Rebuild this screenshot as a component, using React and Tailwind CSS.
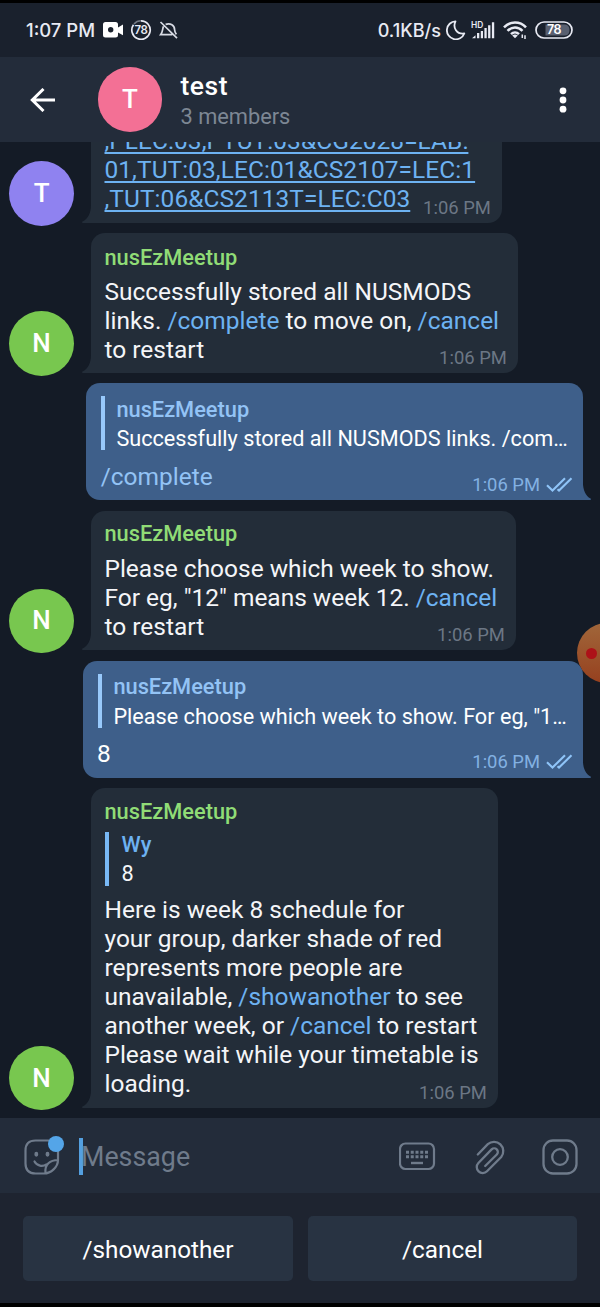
import React from "react";

const Cmd = ({ children }) => <span className="text-[#6db2f2]">{children}</span>;

function Avatar({ letter, color }) {
  return (
    <div className={`flex size-[64.5px] shrink-0 items-center justify-center rounded-full text-[26px] font-medium text-white ${color}`}>
      {letter}
    </div>
  );
}

function Time({ className }) {
  return <span className={`text-[18.4px] leading-[22px] whitespace-nowrap ${className}`}>1:06 PM</span>;
}

function Incoming({ letter, color, width, height, last, children }) {
  return (
    <div className="flex shrink-0 items-end pl-[9.3px]">
      <div className="-mb-[2.7px] flex">
        <Avatar letter={letter} color={color} />
      </div>
      <div className={`relative ml-[17px] flex flex-col justify-end rounded-[14px] rounded-bl-none bg-[#232d39] pr-[11px] pb-[9.4px] pl-[13.7px] ${width} ${height}`}>
        <svg className="absolute bottom-0 -left-[9px]" width="10" height="18" viewBox="0 0 10 18" fill="#232d39">
          <path d="M10 0H9C9 8 6 14 0.5 16.6C-.3 17.2 0 18 1 18H10Z" />
        </svg>
        {children}
        <div className="flex h-[29px] items-center justify-between">
          {last}
          <Time className="mt-[18px] text-[#6c7785]" />
        </div>
      </div>
    </div>
  );
}

function Outgoing({ width, quote, children }) {
  return (
    <div className="flex shrink-0 justify-end pr-[17px]">
      <div className={`relative flex h-[116.8px] flex-col rounded-[14px] rounded-br-none bg-[#3e5f8a] pt-[13px] pr-[10px] pl-[14.7px] ${width}`}>
        <svg className="absolute -right-[8px] bottom-0" width="9" height="18" viewBox="0 0 10 18" preserveAspectRatio="none" fill="#3e5f8a">
          <path d="M0 0H1C1 8 4 14 9.5 16.6C10.3 17.2 10 18 9 18H0Z" />
        </svg>
        <div className="flex h-[54px] flex-col border-l-4 border-[#98c9fb] pl-[11.7px]">
          <div className="mt-[0.6px] text-[21.8px] leading-[26px] font-medium text-[#93c3f5]">nusEzMeetup</div>
          <div className="mt-[3.4px] text-[21.65px] leading-[26px] whitespace-nowrap text-white">{quote}</div>
        </div>
        <div className="mt-[11.4px] flex h-[29px] items-center justify-between">
          {children}
          <div className="mt-[17px] flex items-center gap-[6px]">
            <Time className="text-[#83b1e2]" />
            <svg width="27" height="16" viewBox="0 0 27 16" fill="none" stroke="#8fc4f8" strokeWidth="2.1">
              <path d="M1 8.3L6.5 13.6L19 1.2M11.5 12.2L13 13.6L25.5 1.2" />
            </svg>
          </div>
        </div>
      </div>
    </div>
  );
}

const Sender = ({ className }) => (
  <div className={`text-[21.8px] leading-[26px] font-medium text-[#90dc76] ${className}`}>nusEzMeetup</div>
);

function StatusBar() {
  return (
    <div className="flex h-[54px] shrink-0 items-center bg-[#1a212d] pr-[27px] pl-[26px] font-['Inter',sans-serif] text-[18.5px] font-medium text-[#e8eaf3]">
      <span className="mt-[1px] w-[70px] whitespace-nowrap">1:07 PM</span>
      <svg className="ml-[7px]" width="21" height="16" viewBox="0 0 21 16" fill="#fff">
        <path fillRule="evenodd" d="M2.5 0H12.5Q15 0 15 2.5V5.5L20 2.6V13.2L15 10.4V13Q15 15.5 12.5 15.5H2.5Q0 15.5 0 13V2.5Q0 0 2.5 0ZM7.7 5A2.7 2.7 0 1 0 7.7 10.4A2.7 2.7 0 1 0 7.7 5Z" />
      </svg>
      <svg className="ml-[6px]" width="22" height="22" viewBox="0 0 22 22">
        <path d="M11 1.8A9.2 9.2 0 1 1 3.5 5.7" fill="none" stroke="#e8eaf3" strokeWidth="1.7" />
        <path d="M4 5A9.2 9.2 0 0 1 11 1.8" fill="none" stroke="#737985" strokeWidth="1.5" />
        <text x="11" y="15" textAnchor="middle" fontSize="11.5" fontWeight="600" letterSpacing="-0.5" fill="#e8eaf3">78</text>
      </svg>
      <svg className="ml-[7px]" width="20" height="19" viewBox="0 0 20 19" fill="none" stroke="#d8dbe4" strokeWidth="1.7">
        <path d="M1.5 1L18 17.2M4.5 5.4C3.3 8 4.1 10.5 1.6 13.7H13.4M6.6 3.4C11.5 1.6 15.5 4.6 15.6 8.7C15.7 10.6 16.3 12 17.4 13.4" />
      </svg>
      <span className="mt-[1px] ml-auto text-[18.1px] whitespace-nowrap">0.1KB/s</span>
      <svg className="ml-[5px]" width="20" height="20" viewBox="0 0 20 20" fill="none" stroke="#e8eaf3" strokeWidth="1.8" strokeLinejoin="round">
        <path d="M9.5 1.3C6.4 7.6 10.8 14.6 18.3 13.5A9 9 0 1 1 9.5 1.3Z" />
      </svg>
      <svg className="ml-[5px]" width="24" height="20" viewBox="0 0 24 20" fill="#e8eaf3">
        <text x="0" y="7.6" fontSize="8.4" fontWeight="600">HD</text>
        <path d="M1 18.2L4.5 15.2V18.2ZM6 13H8.3V18.2H6ZM9.8 11H12V18.2H9.8ZM13.4 8H15.7V18.2H13.4ZM17.1 5.2H19.4V18.2H17.1ZM20.9 2.2H23.2V18.2H20.9Z" />
      </svg>
      <svg className="ml-[8px]" width="24" height="20" viewBox="0 0 24 20" fill="none" stroke="#e8eaf3" strokeWidth="2.5">
        <path d="M1 7.3C7 .9 17 .9 23 7.3M4.5 10.8C9 6.3 15 6.3 19.5 10.8M8 14.1C10.3 11.9 13.7 11.9 16 14.1" />
        <path d="M9.2 15.4Q12 13.4 14.8 15.4L12 18.3Z" fill="#e8eaf3" stroke="none" />
        <path d="M19.3 14.5V18M22 15.2V19" strokeWidth="1.5" />
      </svg>
      <svg className="ml-[8px]" width="38" height="18" viewBox="0 0 38 18">
        <rect x="1" y="1" width="36" height="16" rx="8" fill="none" stroke="#e8eaf3" strokeWidth="1.7" />
        <path d="M10.5 3.5H30Q34.5 4 34.5 9T30 14.5H10.5Z" fill="#596070" />
        <text x="19" y="13.4" textAnchor="middle" fontSize="12.5" fontWeight="600" letterSpacing="-0.5" fill="#fff">78</text>
      </svg>
    </div>
  );
}

function Header() {
  return (
    <div className="flex h-[85px] shrink-0 items-center bg-[#232c3a] pr-[33px] pl-[30px]">
      <svg width="25" height="24" viewBox="0 0 25 24" fill="none" stroke="#fff" strokeWidth="3">
        <path d="M25 12H2.5M13.5 1L2.3 12L13.5 23" />
      </svg>
      <div className="ml-[42.7px] flex">
        <Avatar letter="T" color="bg-[#f37095]" />
      </div>
      <div className="mt-[3px] ml-[18.3px] flex flex-col">
        <span className="text-[26.5px] leading-[30px] font-medium tracking-[0.5px] text-white">test</span>
        <span className="mt-[1px] text-[21.8px] leading-[30px] text-[#7d8794]">3 members</span>
      </div>
      <svg className="ml-auto" width="8" height="26" viewBox="0 0 8 26" fill="#fff">
        <circle cx="4" cy="3.8" r="3.4" />
        <circle cx="4" cy="13" r="3.4" />
        <circle cx="4" cy="22.2" r="3.4" />
      </svg>
    </div>
  );
}

function Chat() {
  return (
    <div className="flex h-[976px] shrink-0 flex-col justify-end gap-[10.5px] overflow-hidden bg-[#141b26] pb-[10.3px] text-[24.48px] leading-[29px] text-[#f4f5f8]">
      <Incoming
        letter="T"
        color="bg-[#8f82f0]"
        width="w-[411px]"
        height="h-[110px]"
        last={<span className="tracking-[0.06px] whitespace-nowrap text-[#6db2f2] underline decoration-[1.5px] underline-offset-[3px]">,TUT:06&amp;CS2113T=LEC:C03</span>}
      >
        <div className="tracking-[0.06px] whitespace-nowrap text-[#6db2f2] underline decoration-[1.5px] underline-offset-[3px]">
          <div>,PLEC:03,PTUT:03&amp;CG2028=LAB:</div>
          <div>01,TUT:03,LEC:01&amp;CS2107=LEC:1</div>
        </div>
      </Incoming>

      <Incoming letter="N" color="bg-[#78c74f]" width="w-[427px]" height="h-[139.6px]" last={<span>to restart</span>}>
        <Sender className="mb-[6px]" />
        <div className="whitespace-nowrap">Successfully stored all NUSMODS</div>
        <div className="whitespace-nowrap">links. <Cmd>/complete</Cmd> to move on, <Cmd>/cancel</Cmd></div>
      </Incoming>

      <Outgoing width="w-[497px]" quote="Successfully stored all NUSMODS links. /com…">
        <span className="text-[#93c3f5]">/complete</span>
      </Outgoing>

      <Incoming letter="N" color="bg-[#78c74f]" width="w-[425px]" height="h-[139.6px]" last={<span>to restart</span>}>
        <Sender className="mb-[6.5px]" />
        <div className="whitespace-nowrap">Please choose which week to show.</div>
        <div className="whitespace-nowrap">For eg, "12" means week 12. <Cmd>/cancel</Cmd></div>
      </Incoming>

      <Outgoing width="w-[500px]" quote={'Please choose which week to show. For eg, "1…'}>
        <span className="-ml-[0.7px] text-white">8</span>
      </Outgoing>

      <Incoming letter="N" color="bg-[#78c74f]" width="w-[407px]" height="h-[319.6px]" last={<span>loading.</span>}>
        <Sender />
        <div className="mt-[7px] mb-[9.6px] ml-[1px] flex h-[54px] flex-col border-l-4 border-[#78b8f5] pl-[12px]">
          <div className="text-[21.8px] leading-[26px] font-medium text-[#6db2f2]">Wy</div>
          <div className="mt-[3px] text-[21.65px] leading-[26px]">8</div>
        </div>
        <div className="whitespace-nowrap">
          <div>Here is week 8 schedule for</div>
          <div>your group, darker shade of red</div>
          <div>represents more people are</div>
          <div>unavailable, <Cmd>/showanother</Cmd> to see</div>
          <div>another week, or <Cmd>/cancel</Cmd> to restart</div>
          <div>Please wait while your timetable is</div>
        </div>
      </Incoming>
    </div>
  );
}

function Composer() {
  return (
    <div className="flex h-[75px] shrink-0 items-center bg-[#232c3a] pt-[2px] pr-[22px] pl-[24px] text-[#6f7b8b]">
      <div className="relative flex">
        <svg width="36" height="36" viewBox="0 0 36 36" fill="none" stroke="currentColor" strokeWidth="2.2" strokeLinecap="round">
          <path d="M34 20V11Q34 1.5 24.5 1.5H11.5Q1.5 1.5 1.5 11.5V24.5Q1.5 34.5 11.5 34.5H20C27 34.5 34 28 34 21C26 21 20.5 25.5 21.5 34M10.5 22.5C13 27 18.5 28.2 22.5 25.3" />
          <ellipse cx="12.3" cy="15.2" rx="1.2" ry="1.7" fill="currentColor" strokeWidth="1.5" />
          <ellipse cx="23.5" cy="15.2" rx="1.2" ry="1.7" fill="currentColor" strokeWidth="1.5" />
        </svg>
        <span className="absolute -top-[3px] left-[23.5px] size-[16px] rounded-full bg-[#54a5e8]" />
      </div>
      <span className="ml-[19px] h-[37px] w-[3.5px] bg-[#54a0e0]" />
      <span className="-ml-[1.5px] text-[26.8px] leading-[32px]">Message</span>
      <svg className="ml-auto" width="37" height="29" viewBox="0 0 37 29" fill="none" stroke="currentColor" strokeWidth="2.2">
        <rect x="1" y="1.5" width="34" height="25.5" rx="5.5" />
        <path d="M7 10.2H29.5M7 14.8H29.5" strokeWidth="3" strokeDasharray="3 1.75" />
        <path d="M12 21H24" strokeWidth="2.4" />
      </svg>
      <svg className="ml-[39px]" width="32" height="36" viewBox="0 0 32 36" fill="none" stroke="currentColor" strokeWidth="2.3" strokeLinecap="round">
        <path d="M2.8 15.5L12.8 5.2A9.3 9.3 0 0 1 26.2 18L12 32.2A5.9 5.9 0 0 1 3.4 24L16.6 10.4A3.6 3.6 0 0 1 21.8 15.5L10.2 27" />
      </svg>
      <svg className="ml-[35px]" width="36" height="36" viewBox="0 0 36 36" fill="none" stroke="currentColor" strokeWidth="2.3">
        <rect x="1.5" y="1.5" width="33" height="33" rx="9.5" />
        <circle cx="18" cy="18" r="7.8" />
      </svg>
    </div>
  );
}

export default function App() {
  return (
    <div className="relative flex h-[1307px] w-[600px] flex-col overflow-hidden bg-black pt-[3px] font-['Roboto',sans-serif]">
      <StatusBar />
      <Header />
      <Chat />
      <Composer />
      <div className="flex h-[110px] shrink-0 gap-[15px] bg-[#1e2430] px-[23px] pt-[23px] text-[24.3px] text-white">
        <button className="h-[65px] w-[270px] rounded-[5px] bg-[#283342] pt-[3px]">/showanother</button>
        <button className="h-[65px] w-[269px] rounded-[5px] bg-[#283342] pt-[3px]">/cancel</button>
      </div>
      <div className="absolute top-[623px] left-[577px] flex size-[60px] items-center rounded-full bg-gradient-to-b from-[#a0663a] to-[#96401e] pl-[9px]">
        <span className="size-[11px] rounded-full bg-[#ad1218]" />
      </div>
    </div>
  );
}
